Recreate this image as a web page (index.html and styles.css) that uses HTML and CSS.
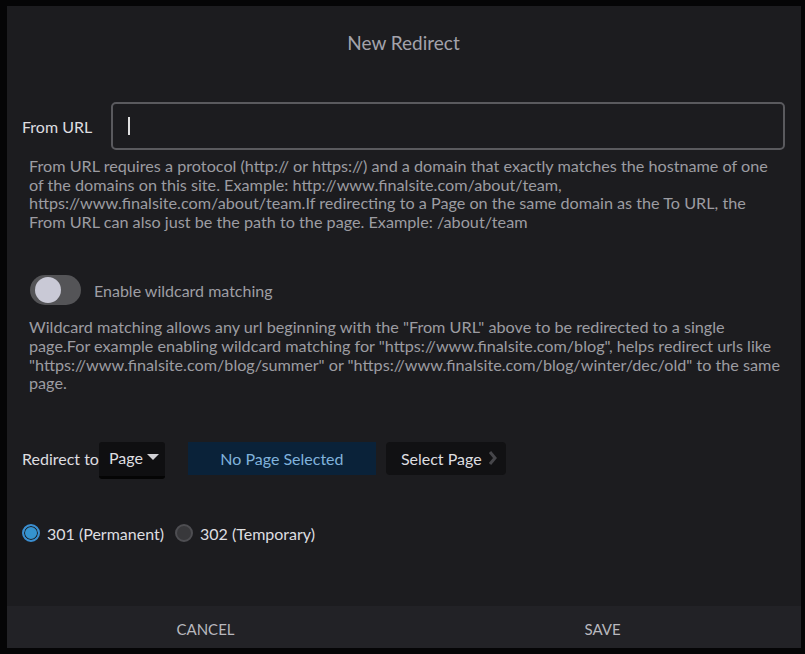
FILE: index.html
```html
<!DOCTYPE html>
<html lang="en">
<head>
    <meta charset="UTF-8">
    <title>New Redirect</title>
    <link rel="stylesheet" href="styles.css">
</head>
<body>
    <div class="modal">
        <div class="modal-body">
            <h1 class="title">New Redirect</h1>

            <div class="field-row">
                <label class="field-label" for="from-url">From URL</label>
                <div class="input-box">
                    <span class="caret"></span>
                </div>
            </div>
            <p class="help">From URL requires a protocol (http:// or https://) and a domain that exactly matches the hostname of one<br>of the domains on this site. Example: http://www.finalsite.com/about/team,<br>https://www.finalsite.com/about/team.If redirecting to a Page on the same domain as the To URL, the<br>From URL can also just be the path to the page. Example: /about/team</p>

            <div class="toggle-row">
                <span class="toggle"><span class="knob"></span></span>
                <span class="toggle-label">Enable wildcard matching</span>
            </div>
            <p class="help">Wildcard matching allows any url beginning with the "From URL" above to be redirected to a single<br>page.For example enabling wildcard matching for "https://www.finalsite.com/blog", helps redirect urls like<br>"https://www.finalsite.com/blog/summer" or "https://www.finalsite.com/blog/winter/dec/old" to the same<br>page.</p>

            <div class="redirect-row">
                <span class="field-label">Redirect to</span>
                <span class="dropdown">Page <span class="arrow"></span></span>
                <span class="selected-page">No Page Selected</span>
                <span class="select-btn">Select Page
                    <svg width="9" height="16" viewBox="0 0 9 16"><path d="M2 2 L7 8 L2 14" fill="none" stroke="#46464a" stroke-width="3"/></svg>
                </span>
            </div>

            <div class="radio-row">
                <span class="radio checked"></span>
                <span class="radio-label">301 (Permanent)</span>
                <span class="radio"></span>
                <span class="radio-label">302 (Temporary)</span>
            </div>
        </div>
        <div class="modal-footer">
            <button class="footer-btn">CANCEL</button>
            <button class="footer-btn">SAVE</button>
        </div>
    </div>
</body>
</html>
```

FILE: styles.css
```css
html, body {
    margin: 0;
    padding: 0;
    height: 100%;
}
body {
    background: #050506;
    font-family: 'Lato', 'Liberation Sans', sans-serif;
    box-sizing: border-box;
    padding: 6px 4px 6px 7px;
}
.modal {
    background-color: #1c1c1f;
    height: 100%;
    display: flex;
    flex-direction: column;
}
.modal-body {
    flex: 1;
    padding: 0 16px 0 15px;
}
.title {
    margin: 0;
    padding-top: 25px;
    text-align: center;
    font-size: 19px;
    font-weight: normal;
    color: #a3a3ab;
    line-height: 24px;
}
.field-row {
    display: flex;
    align-items: center;
    margin-top: 47px;
}
.field-label {
    color: #dedee0;
    font-size: 16px;
}
.field-row .field-label {
    width: 89px;
}
.input-box {
    flex: 1;
    height: 48px;
    box-sizing: border-box;
    border: 2px solid #5a5a5e;
    border-radius: 5px;
    display: flex;
    align-items: center;
    padding-left: 15px;
}
.caret {
    width: 2px;
    height: 18px;
    background: #e0e0e0;
}
.help {
    margin: 7px 0 0 7px;
    color: #9c9ca2;
    font-size: 16.2px;
    line-height: 18.6px;
    white-space: nowrap;
}
.toggle-row {
    display: flex;
    align-items: center;
    margin-top: 44px;
    padding-left: 8px;
}
.toggle {
    width: 51px;
    height: 30px;
    border-radius: 15px;
    background: #545457;
    position: relative;
}
.knob {
    position: absolute;
    left: 5px;
    top: 2px;
    width: 26px;
    height: 26px;
    border-radius: 50%;
    background: #c9c9d6;
}
.toggle-label {
    margin-left: 13px;
    color: #9e9ea4;
    font-size: 16px;
}
.toggle-row + .help {
    margin-top: 13px;
}
.redirect-row {
    display: flex;
    align-items: flex-start;
    margin-top: 49px;
}
.redirect-row .field-label {
    line-height: 33px;
}
.dropdown {
    background: #0f0f11;
    color: #dedee0;
    font-size: 16px;
    height: 37px;
    padding: 0 6px 3px 10px;
    border-radius: 3px;
    box-sizing: border-box;
    border-bottom: 3px solid #050505;
    display: flex;
    align-items: center;
}
.arrow {
    margin-left: 4px;
    width: 0;
    height: 0;
    border-left: 6px solid transparent;
    border-right: 6px solid transparent;
    border-top: 6px solid #d0d0d4;
}
.selected-page {
    margin-left: 23px;
    width: 188px;
    height: 33px;
    line-height: 33px;
    text-align: center;
    background: #0a2239;
    color: #80b2dc;
    font-size: 16px;
}
.select-btn {
    margin-left: 10px;
    height: 33px;
    padding: 0 9px 0 15px;
    background: #111113;
    border-radius: 4px;
    color: #dedee0;
    font-size: 16px;
    display: flex;
    align-items: center;
    gap: 6px;
}
.radio-row {
    display: flex;
    align-items: center;
    margin-top: 45px;
}
.radio {
    width: 14px;
    height: 14px;
    border-radius: 50%;
    border: 2px solid #4e4e52;
    background: #38383b;
    box-sizing: content-box;
}
.radio.checked {
    border-color: #3b8ed0;
    background: #3593cf;
    box-shadow: inset 0 0 0 1px #1c1c1f;
}
.radio-label {
    color: #dedee0;
    font-size: 16px;
    margin: 0 11px 0 7px;
}
.modal-footer {
    display: flex;
    background: #222226;
    height: 42px;
}
.footer-btn {
    flex: 1;
    background: none;
    border: none;
    padding-top: 5px;
    color: #b8b8be;
    font-family: 'Lato', 'Liberation Sans', sans-serif;
    font-size: 15px;
}
```
